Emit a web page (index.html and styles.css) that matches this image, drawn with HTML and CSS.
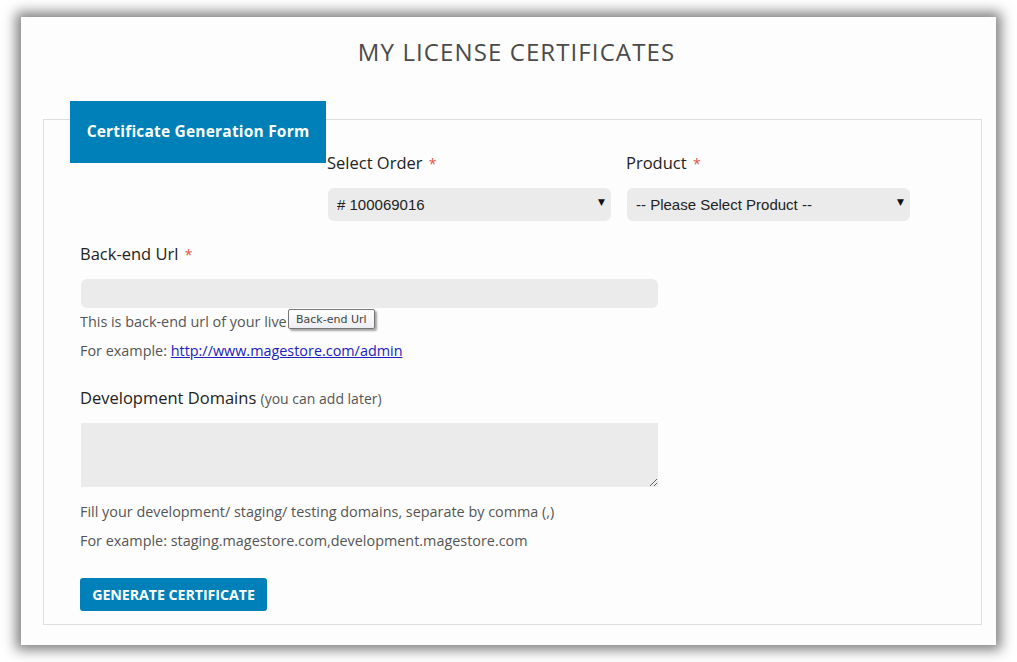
FILE: index.html
```html
<!DOCTYPE html>
<html lang="en">
<head>
<meta charset="utf-8">
<title>My License Certificates</title>
<link rel="stylesheet" href="styles.css">
</head>
<body>
<div class="page">
  <h1 class="title">MY LICENSE CERTIFICATES</h1>
  <div class="box">
    <div class="top-row">
      <div class="tab">Certificate Generation Form</div>
      <div class="field col">
        <label class="label">Select Order <span class="req">*</span></label>
        <div class="select-wrap">
          <select class="select"><option># 100069016</option></select>
          <span class="arrow">&#9660;</span>
        </div>
      </div>
      <div class="field col">
        <label class="label">Product <span class="req">*</span></label>
        <div class="select-wrap">
          <select class="select"><option>-- Please Select Product --</option></select>
          <span class="arrow">&#9660;</span>
        </div>
      </div>
    </div>
    <div class="body">
      <div class="field">
        <label class="label">Back-end Url <span class="req">*</span></label>
        <input class="input" type="text">
        <div class="help">
          <p class="help-line tip-anchor">This is back-end url of your live<span class="tooltip">Back-end Url</span></p>
          <p class="help-line">For example: <a class="link" href="#">http://www.magestore.com/admin</a></p>
        </div>
      </div>
      <div class="field dev">
        <label class="label">Development Domains <span class="muted">(you can add later)</span></label>
        <textarea class="textarea"></textarea>
        <div class="help help-dev">
          <p class="help-line">Fill your development/ staging/ testing domains, separate by comma (,)</p>
          <p class="help-line">For example: staging.magestore.com,development.magestore.com</p>
        </div>
      </div>
      <button class="btn" type="button">GENERATE CERTIFICATE</button>
    </div>
  </div>
</div>
</body>
</html>
```

FILE: styles.css
```css
html, body {
  margin: 0;
  padding: 0;
  background: #ffffff;
}
body {
  padding: 17px 21px;
  font-family: "Open Sans", "Liberation Sans", sans-serif;
  color: #222;
}
.page {
  width: 975px;
  height: 628px;
  box-sizing: border-box;
  background: #fdfdfd;
  box-shadow: 0 0 12px 5px rgba(0, 0, 0, 0.5);
  padding: 20px 14px 0 22px;
}
.title {
  margin: 0;
  text-align: center;
  font-weight: 400;
  font-size: 24px;
  line-height: 30px;
  color: #4a4a4a;
  letter-spacing: 1.1px;
  padding-left: 8px;
}
.box {
  margin-top: 52px;
  border: 1px solid #dedede;
  height: 506px;
  box-sizing: border-box;
}
.top-row {
  display: flex;
  margin-top: -19px;
  padding-left: 26px;
}
.tab {
  width: 256px;
  height: 62px;
  background: #0080b8;
  color: #fff;
  font-weight: 700;
  font-size: 15.5px;
  letter-spacing: 0.2px;
  display: flex;
  align-items: center;
  justify-content: center;
  padding-bottom: 2px;
  box-sizing: border-box;
  flex: none;
}
.col {
  display: flex;
  flex-direction: column;
  padding-top: 52px;
  margin-left: 1px;
}
.col + .col {
  margin-left: 15px;
}
.col .select-wrap {
  width: 283px;
  margin-left: 1px;
}
.label {
  display: block;
  font-size: 16.5px;
  line-height: 20px;
  color: #222;
}
.req {
  color: #e0524a;
  margin-left: 2px;
  font-size: 14px;
}
.muted {
  font-size: 14px;
  color: #555;
}
.select-wrap {
  position: relative;
  margin-top: 14px;
  height: 33px;
}
.select {
  appearance: none;
  -webkit-appearance: none;
  width: 100%;
  height: 33px;
  border: none;
  border-radius: 6px;
  background: #ebebeb;
  font-family: "Liberation Sans", Arial, sans-serif;
  font-size: 15px;
  color: #222;
  padding: 0 9px;
  outline: none;
}
.arrow {
  position: absolute;
  right: 6px;
  top: 9px;
  font-size: 9px;
  color: #111;
  font-family: "DejaVu Sans", sans-serif;
  pointer-events: none;
}
.body {
  padding: 23px 0 0 36px;
}
.field {
  display: flex;
  flex-direction: column;
}
.input {
  margin-top: 14px;
  margin-left: 1px;
  width: 577px;
  height: 29px;
  border: none;
  border-radius: 6px;
  background: #ebebeb;
  box-sizing: border-box;
  outline: none;
}
.help {
  margin-top: 4px;
}
.help-line {
  margin: 0 0 9px 0;
  font-size: 14.4px;
  line-height: 20px;
  color: #555;
}
.help-line:last-child {
  margin-bottom: 0;
}
.tip-anchor {
  position: relative;
}
.tooltip {
  position: absolute;
  left: 208px;
  top: -3px;
  padding: 0 7px;
  height: 20px;
  line-height: 19px;
  font-family: "DejaVu Sans", "Liberation Sans", sans-serif;
  font-size: 11px;
  color: #444;
  background: linear-gradient(#ffffff, #eceef2);
  border: 1px solid #767676;
  border-radius: 2px;
  box-shadow: 2px 2px 2px rgba(0, 0, 0, 0.35);
  box-sizing: border-box;
}
.link {
  color: #2020c0;
  text-decoration: underline;
}
.dev {
  margin-top: 27px;
}
.textarea {
  margin-top: 14px;
  margin-left: 1px;
  width: 577px;
  height: 64px;
  border: none;
  background: #ebebeb;
  box-sizing: border-box;
  outline: none;
  border-radius: 0;
}
.help-dev {
  margin-top: 15px;
}
.btn {
  margin-top: 27px;
  width: 187px;
  height: 33px;
  border: none;
  border-radius: 3px;
  background: #0080b8;
  color: #fff;
  font-family: "Open Sans", "Liberation Sans", sans-serif;
  font-weight: 700;
  font-size: 14.3px;
  letter-spacing: -0.1px;
  padding: 0;
  cursor: pointer;
}
```
